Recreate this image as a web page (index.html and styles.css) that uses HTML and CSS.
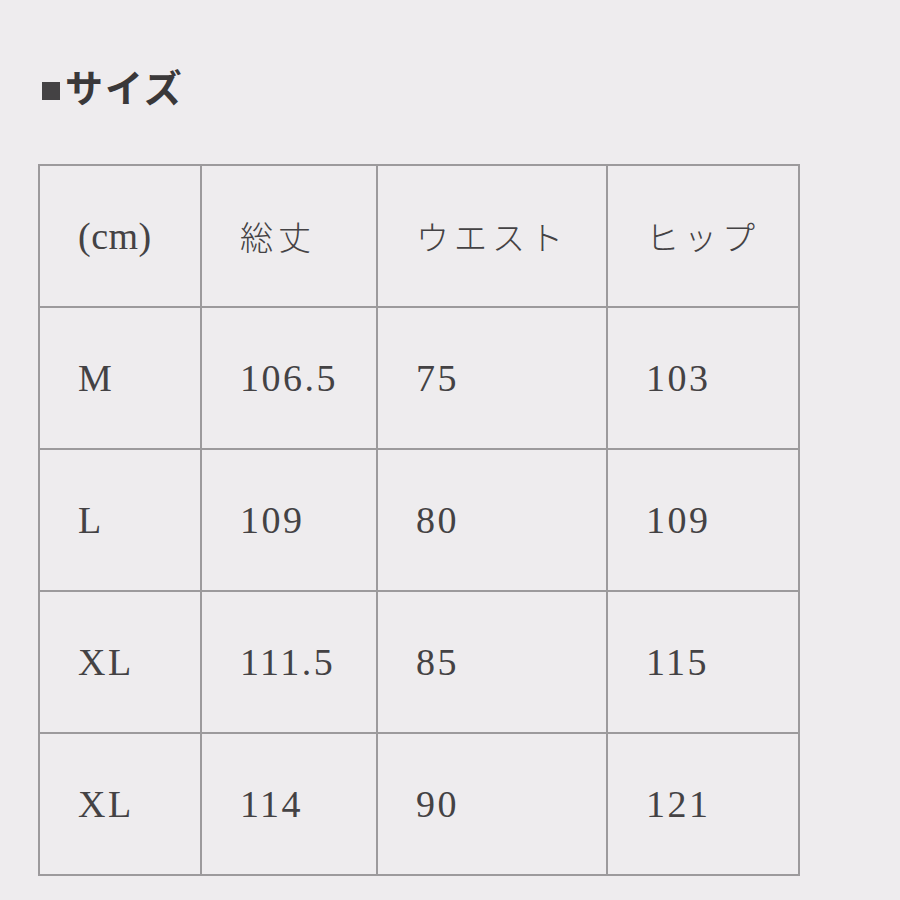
FILE: index.html
```html
<!DOCTYPE html>
<html lang="ja">
<head>
<meta charset="utf-8">
<link rel="stylesheet" href="styles.css">
</head>
<body>
<div class="page">
  <h1 class="title"><span class="sq"></span>サイズ</h1>
  <table class="size">
    <colgroup>
      <col class="c1"><col class="c2"><col class="c3"><col class="c4">
    </colgroup>
    <tr class="head"><td class="num">(cm)</td><td>総丈</td><td>ウエスト</td><td>ヒップ</td></tr>
    <tr><td>M</td><td>106.5</td><td>75</td><td>103</td></tr>
    <tr><td>L</td><td>109</td><td>80</td><td>109</td></tr>
    <tr><td>XL</td><td>111.5</td><td>85</td><td>115</td></tr>
    <tr><td>XL</td><td>114</td><td>90</td><td>121</td></tr>
  </table>
</div>
</body>
</html>
```
FILE: styles.css
```css
html, body {
  margin: 0;
  padding: 0;
  background: #eeecee;
}
.page {
  width: 900px;
  height: 900px;
  padding: 62px 0 0 38px;
  box-sizing: border-box;
}
.title {
  margin: 0 0 54px 4px;
  height: 48px;
  display: flex;
  align-items: center;
  font-family: "Noto Sans CJK JP", sans-serif;
  font-weight: 700;
  font-size: 38px;
  line-height: 48px;
  color: #3a3839;
  letter-spacing: 2px;
}
.sq {
  display: inline-block;
  width: 18px;
  height: 18px;
  background: #444244;
  margin: 10px 5px 0 0;
}
.size {
  border-collapse: collapse;
  table-layout: fixed;
  width: 760px;
  font-family: "Liberation Serif", serif;
  color: #444244;
}
.c1 { width: 162px; }
.c2 { width: 176px; }
.c3 { width: 230px; }
.c4 { width: 192px; }
.size td {
  border: 2px solid #9c9a9c;
  height: 140px;
  padding: 0 0 0 38px;
  font-size: 38px;
  letter-spacing: 2.5px;
  vertical-align: middle;
}
.size tr.head td {
  font-family: "Noto Sans CJK JP", sans-serif;
  font-weight: 300;
  font-size: 33px;
  letter-spacing: 5px;
}
.size tr.head td.num {
  font-family: "Liberation Serif", serif;
  font-weight: 400;
  font-size: 38px;
  letter-spacing: 0.5px;
}
```
